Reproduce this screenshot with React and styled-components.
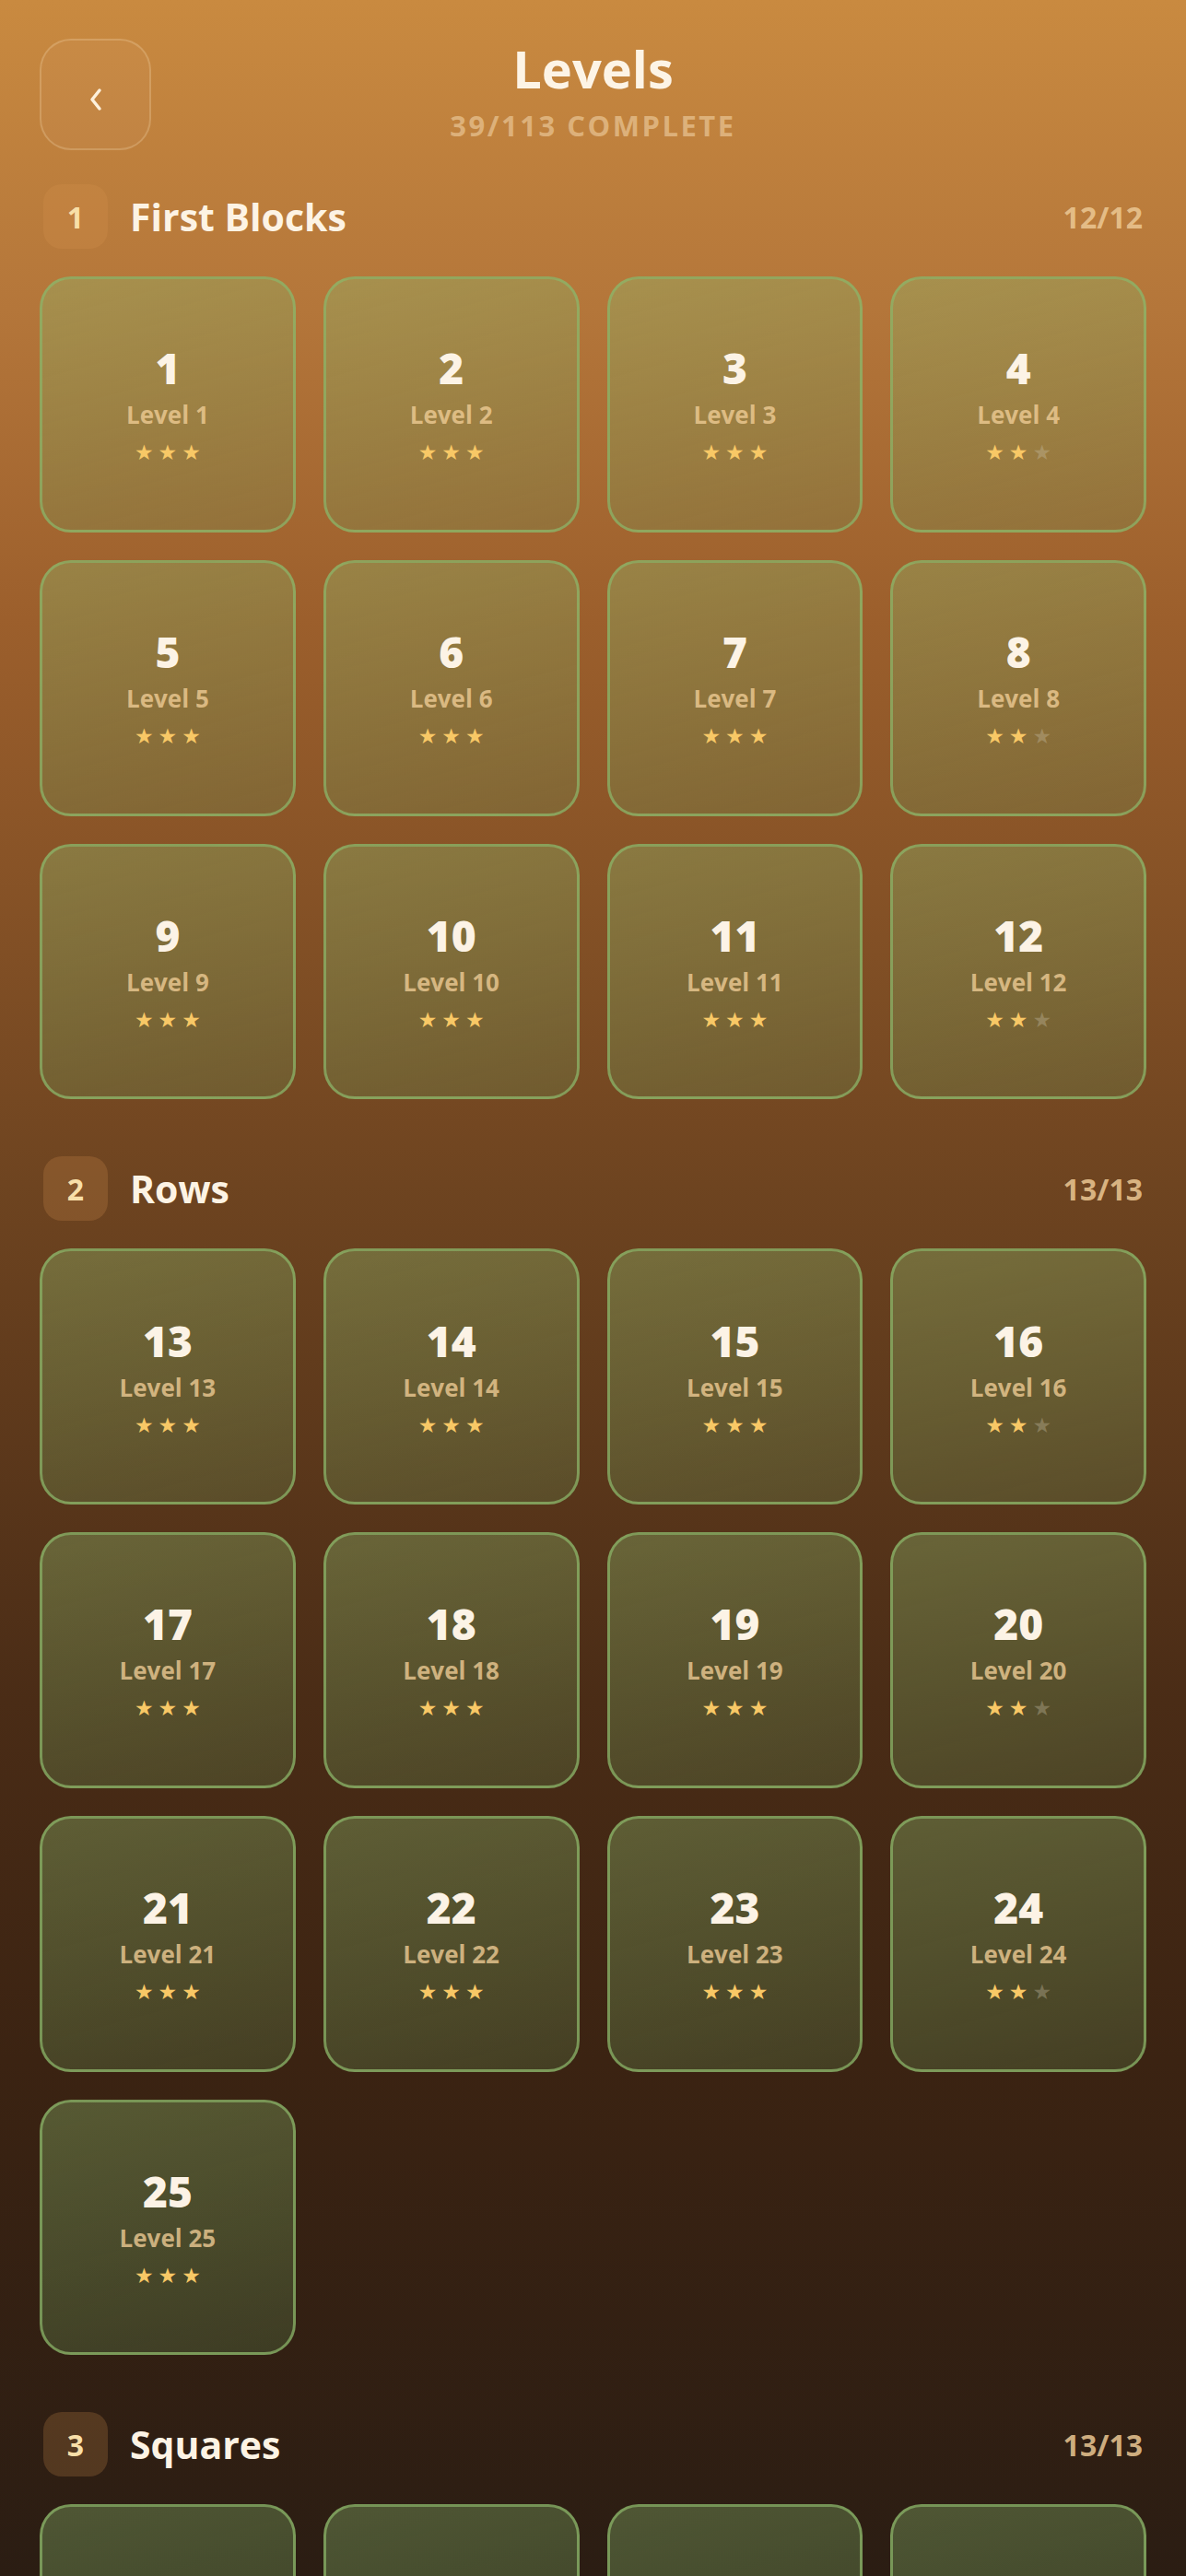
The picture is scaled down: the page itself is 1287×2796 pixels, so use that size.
import React from "react";
import styled, { createGlobalStyle } from "styled-components";

const GlobalStyle = createGlobalStyle`
  html, body {
    margin: 0;
    padding: 0;
    background: #2a1c12;
  }
  body {
    font-family: "Open Sans", "Noto Sans", sans-serif;
  }
  * {
    box-sizing: border-box;
  }
`;

const Page = styled.div`
  height: 100vh;
  overflow: hidden;
  padding: 42px 43px 0;
  display: flex;
  flex-direction: column;
  gap: 37px;
  background: linear-gradient(
    180deg,
    #c98a40 0%,
    #b4763a 12%,
    #9c5f2c 24%,
    #6e4420 46%,
    #4a2c16 66%,
    #3b2312 80%,
    #2b1d13 100%
  );
`;

const Header = styled.header`
  display: grid;
  grid-template-columns: 121px 1fr 121px;
  align-items: center;
  height: 121px;
`;

const BackButton = styled.button`
  width: 121px;
  height: 121px;
  border-radius: 34px;
  border: 2px solid rgba(255, 232, 196, 0.22);
  background: rgba(255, 240, 220, 0.04);
  display: flex;
  align-items: center;
  justify-content: center;
  padding: 10px 0 0;
  cursor: pointer;
`;

const TitleBlock = styled.div`
  align-self: start;
  display: flex;
  flex-direction: column;
  align-items: center;
  gap: 12px;
`;

const Title = styled.h1`
  margin: 0;
  font-size: 56px;
  line-height: 64px;
  font-weight: 700;
  color: #fdf4e6;
`;

const Subtitle = styled.div`
  font-size: 31px;
  line-height: 36px;
  font-weight: 700;
  letter-spacing: 2.5px;
  color: rgba(250, 224, 184, 0.5);
`;

const Sections = styled.div`
  display: flex;
  flex-direction: column;
  gap: 62px;
`;

const Section = styled.section`
  display: flex;
  flex-direction: column;
  gap: 30px;
`;

const SectionHead = styled.div`
  display: flex;
  align-items: center;
  gap: 24px;
  padding: 0 4px;
  height: 70px;
`;

const Badge = styled.div`
  width: 70px;
  height: 70px;
  border-radius: 20px;
  background: rgba(220, 150, 80, 0.22);
  display: flex;
  align-items: center;
  justify-content: center;
  font-size: 32px;
  font-weight: 700;
  color: #f8dfa8;
`;

const SectionTitle = styled.h2`
  margin: 0;
  flex: 1;
  font-size: 41px;
  font-weight: 700;
  color: #fdf3e4;
`;

const Count = styled.div`
  font-size: 32px;
  font-weight: 700;
  color: rgba(236, 200, 148, 0.85);
`;

const Grid = styled.div`
  display: grid;
  grid-template-columns: repeat(4, 1fr);
  gap: 30px;
`;

const Tile = styled.button`
  aspect-ratio: 1;
  border-radius: 34px;
  border: 3px solid rgba(140, 182, 106, 0.72);
  background: linear-gradient(
    165deg,
    rgba(140, 188, 112, 0.36) 0%,
    rgba(120, 170, 100, 0.3) 55%,
    rgba(100, 150, 90, 0.24) 100%
  );
  display: flex;
  flex-direction: column;
  align-items: center;
  justify-content: center;
  padding: 0;
  font-family: inherit;
  cursor: pointer;
`;

const TileNumber = styled.div`
  font-size: 46px;
  line-height: 50px;
  font-weight: 800;
  color: #fcf3e6;
`;

const TileLabel = styled.div`
  margin-top: 10px;
  font-size: 26px;
  line-height: 32px;
  font-weight: 700;
  color: rgba(240, 205, 150, 0.78);
`;

const Stars = styled.div`
  margin-top: 13px;
  display: flex;
  gap: 5px;
  font-family: "DejaVu Sans", sans-serif;
  font-size: 23px;
  line-height: 24px;
`;

const Star = styled.span`
  color: ${(props) => (props.on ? "#f8c866" : "rgba(205, 195, 170, 0.35)")};
`;

const Chevron = () => (
  <svg width="16" height="26" viewBox="0 0 16 26">
    <polyline
      points="12,3 4,13 12,23"
      fill="none"
      stroke="#fdf1dc"
      strokeWidth="3.5"
      strokeLinecap="round"
      strokeLinejoin="round"
    />
  </svg>
);

const range = (from, to) => {
  const out = [];
  for (let i = from; i <= to; i++) out.push(i);
  return out;
};

const sections = [
  { id: 1, name: "First Blocks", levels: range(1, 12), twoStar: [4, 8, 12] },
  { id: 2, name: "Rows", levels: range(13, 25), twoStar: [16, 20, 24] },
  { id: 3, name: "Squares", levels: range(26, 38), twoStar: [29, 33, 37] },
];

const LevelTile = ({ n, stars }) => (
  <Tile>
    <TileNumber>{n}</TileNumber>
    <TileLabel>Level {n}</TileLabel>
    <Stars>
      {[0, 1, 2].map((i) => (
        <Star key={i} on={i < stars ? 1 : 0}>
          ★
        </Star>
      ))}
    </Stars>
  </Tile>
);

export default function App() {
  return (
    <>
      <GlobalStyle />
      <Page>
        <Header>
          <BackButton aria-label="Back">
            <Chevron />
          </BackButton>
          <TitleBlock>
            <Title>Levels</Title>
            <Subtitle>39/113 COMPLETE</Subtitle>
          </TitleBlock>
          <div />
        </Header>
        <Sections>
          {sections.map((s) => (
            <Section key={s.id}>
              <SectionHead>
                <Badge>{s.id}</Badge>
                <SectionTitle>{s.name}</SectionTitle>
                <Count>
                  {s.levels.length}/{s.levels.length}
                </Count>
              </SectionHead>
              <Grid>
                {s.levels.map((n) => (
                  <LevelTile
                    key={n}
                    n={n}
                    stars={s.twoStar.includes(n) ? 2 : 3}
                  />
                ))}
              </Grid>
            </Section>
          ))}
        </Sections>
      </Page>
    </>
  );
}
